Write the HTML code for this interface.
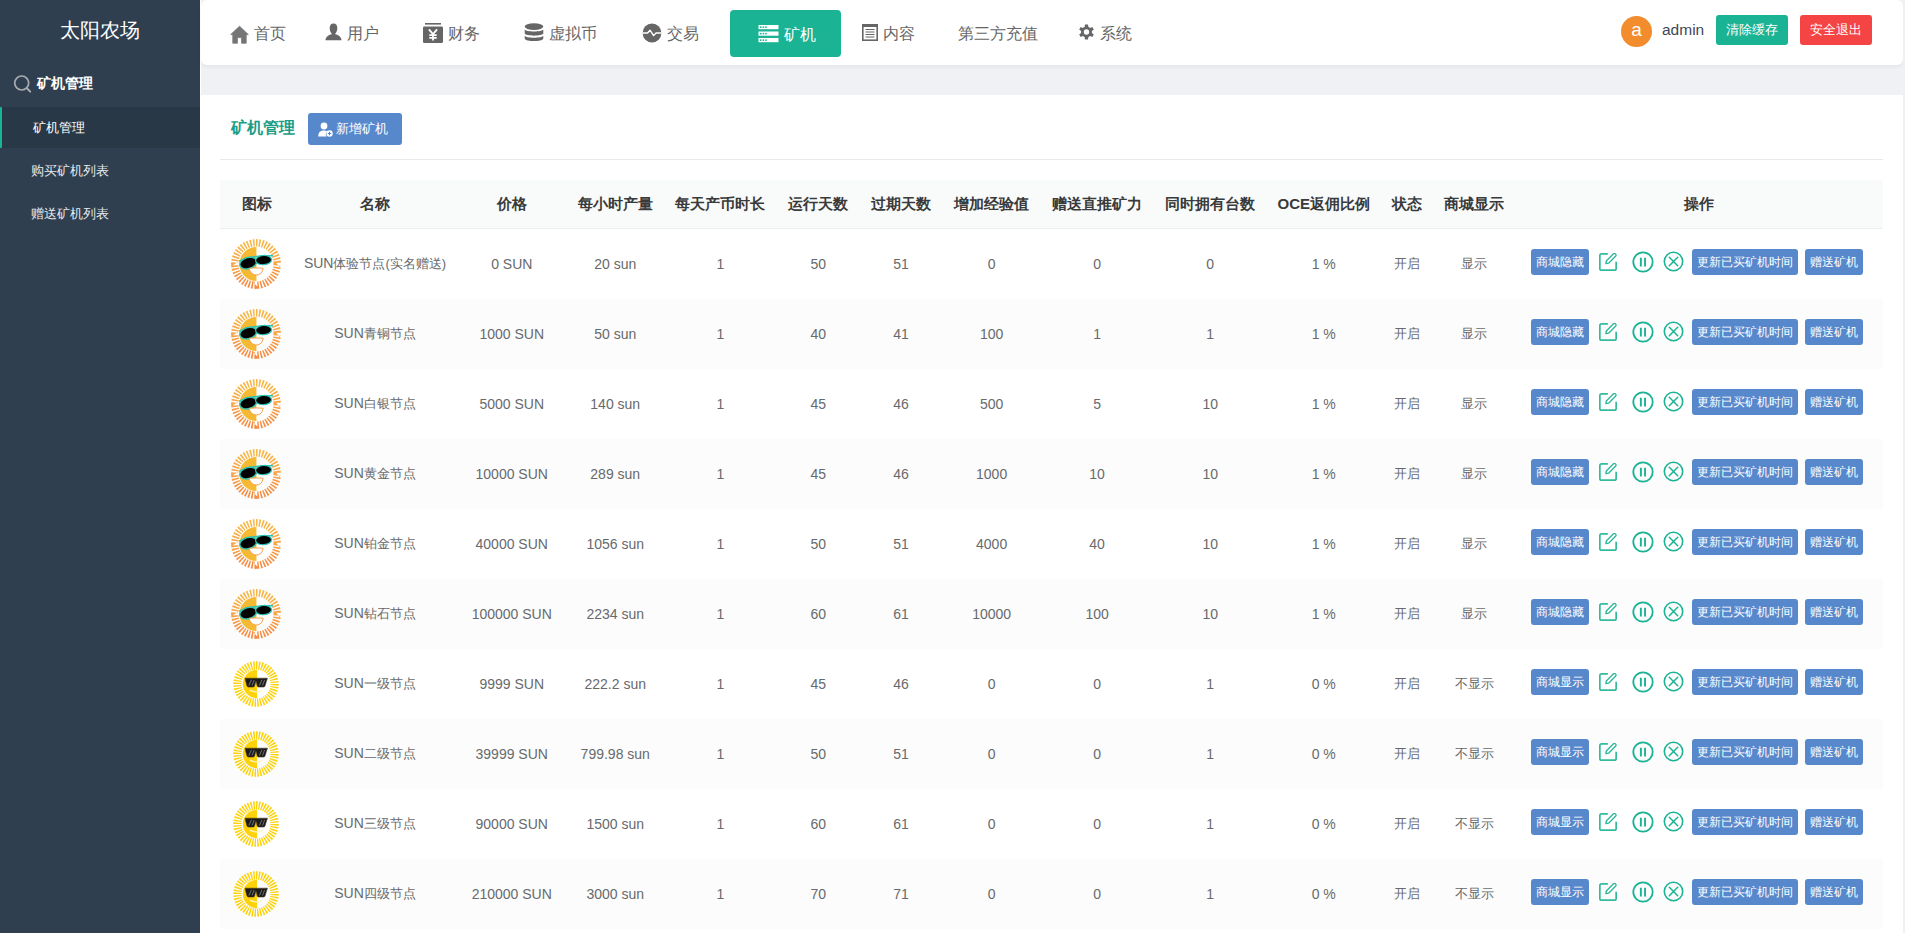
<!DOCTYPE html>
<html><head><meta charset="utf-8">
<style>
*{box-sizing:border-box;margin:0;padding:0}
html,body{width:1905px;height:933px;overflow:hidden;background:#fff;font-family:"Liberation Sans",sans-serif}
#side{position:absolute;left:0;top:0;width:200px;height:933px;background:#2f3f50}
#brand{position:absolute;left:0;top:16px;width:200px;text-align:center;color:#fff;font-size:20px;line-height:28px}
#sgroup{position:absolute;left:13px;top:74px;color:#fff;font-size:14px;font-weight:bold;line-height:18px}
#sgroup svg{position:absolute;left:0;top:1px}
#sgroup span{position:absolute;left:24px;top:0;white-space:nowrap}
.sitem{position:absolute;left:0;width:200px;height:41px;color:#e6e9ed;font-size:13px;line-height:41px;padding-left:31px}
.sitem.act{background:#293846;color:#fff;padding-left:33px}
.sitem.act:before{content:"";position:absolute;left:0;top:0;width:2px;height:41px;background:#1ab394;border-radius:0 1px 1px 0}
#grayband{position:absolute;left:201px;top:0;width:1702px;height:95px;background:#f0f1f5}
#hdr{position:absolute;left:201px;top:0;width:1702px;height:65px;background:#fff;border-radius:6px;box-shadow:0 2px 4px rgba(0,0,0,.05)}
.nav{position:absolute;top:0;height:65px;color:#666;font-size:16px;line-height:65px;white-space:nowrap}
.nav svg{position:absolute}
.nav span{position:absolute;top:1px}
#actbox{position:absolute;left:730px;top:10px;width:111px;height:47px;background:#1ab394;border-radius:4px}
#scroll{position:absolute;left:1903px;top:0;width:2px;height:933px;background:#f0f0f0}
#main{position:absolute;left:201px;top:95px;width:1702px;height:838px;background:#fff}
#ttl{position:absolute;left:231px;top:117px;color:#1a9c85;font-size:16px;font-weight:bold;line-height:22px}
#addbtn{position:absolute;left:308px;top:113px;width:94px;height:32px;background:#5888cc;border-radius:3px;color:#fff;font-size:13px;line-height:32px}
#addbtn svg{position:absolute;left:10px;top:9px}
#addbtn span{position:absolute;left:28px;top:0}
#sep{position:absolute;left:220px;top:159px;width:1663px;height:1px;background:#e7eaec}
table{position:absolute;left:220px;top:180px;width:1663px;border-collapse:separate;border-spacing:0;table-layout:fixed}
th{height:49px;background:#f9fafa;border-bottom:1px solid #eceeef;font-size:15px;font-weight:bold;color:#3a3a3a;text-align:center;padding:0;white-space:nowrap}
td{height:70px;font-size:14px;color:#676a6c;text-align:center;padding:0;white-space:nowrap}
tr.e td{background:#fcfcfc}
td i{font-style:normal;font-size:13px}
.ops{position:relative;height:70px}
.btn{position:absolute;top:20px;height:26px;background:#5888cc;border-radius:3px;color:#fff;font-size:12px;line-height:26px;text-align:center}
.ops svg{position:absolute}
</style></head><body>
<div id="side">
  <div id="brand">太阳农场</div>
  <div id="sgroup"><svg width="20" height="20" viewBox="0 0 20 20"><circle cx="8.7" cy="8" r="7" fill="none" stroke="#a9abad" stroke-width="1.7"/><line x1="13.9" y1="13.2" x2="17.2" y2="16.6" stroke="#a9abad" stroke-width="2" stroke-linecap="round"/></svg><span>矿机管理</span></div>
  <div class="sitem act" style="top:107px">矿机管理</div>
  <div class="sitem" style="top:150px">购买矿机列表</div>
  <div class="sitem" style="top:193px">赠送矿机列表</div>
</div>
<div id="grayband"></div>
<div id="hdr"></div>
<div id="actbox"></div>
<div id="scroll"></div>
<div id="main"></div>
<!-- NAV -->
<svg style="position:absolute;left:230px;top:25px" width="19" height="19" viewBox="0 0 19 19"><path d="M9.5 1.2 L18.3 9.6 L16.2 9.6 L16.2 18.2 L11.6 18.2 L11.6 12.6 L7.4 12.6 L7.4 18.2 L2.8 18.2 L2.8 9.6 L0.7 9.6 Z" fill="#757575" stroke="#757575" stroke-width="0.8" stroke-linejoin="round"/></svg>
<div class="nav" style="left:254px"><span>首页</span></div>
<svg style="position:absolute;left:325px;top:23px" width="17" height="18" viewBox="0 0 17 18"><path d="M8.5 0.5 C11.2 0.5 12.3 2.6 12.3 5.2 C12.3 7.6 11.2 9.6 10.3 10.5 L10.3 11.3 C13.5 12.2 16.2 13.6 16.6 17.3 L0.4 17.3 C0.8 13.6 3.5 12.2 6.7 11.3 L6.7 10.5 C5.8 9.6 4.7 7.6 4.7 5.2 C4.7 2.6 5.8 0.5 8.5 0.5 Z" fill="#666"/></svg>
<div class="nav" style="left:347px"><span>用户</span></div>
<svg style="position:absolute;left:423px;top:23px" width="20" height="20" viewBox="0 0 20 20"><rect x="2" y="0" width="16" height="1.6" fill="#666"/><rect x="0" y="3.6" width="20" height="16.4" rx="1.2" fill="#666"/><path d="M5.9 6.3 L10 11.2 L14.1 6.3 M10 11.2 L10 17.6 M6.3 12.2 H13.7 M6.3 14.9 H13.7" stroke="#fff" stroke-width="1.8" fill="none"/></svg>
<div class="nav" style="left:448px"><span>财务</span></div>
<svg style="position:absolute;left:524px;top:23px" width="20" height="19" viewBox="0 0 20 19"><ellipse cx="10" cy="3.6" rx="9.3" ry="3.4" fill="#666"/><path d="M0.7 6.6 C2 9.2 18 9.2 19.3 6.6 L19.3 10.6 C18 13.4 2 13.4 0.7 10.6 Z" fill="#666"/><path d="M0.7 12.8 C2 15.4 18 15.4 19.3 12.8 L19.3 15.4 C18 19 2 19 0.7 15.4 Z" fill="#666"/></svg>
<div class="nav" style="left:549px"><span>虚拟币</span></div>
<svg style="position:absolute;left:642px;top:23px" width="20" height="20" viewBox="0 0 20 20"><circle cx="10" cy="10" r="9.4" fill="#666"/><path d="M0.4 10 H5.6 L8 7.2 L11.6 12.6 L14 10 H19.6" stroke="#fff" stroke-width="1.4" fill="none" stroke-linejoin="round"/></svg>
<div class="nav" style="left:667px"><span>交易</span></div>
<svg style="position:absolute;left:758px;top:25px" width="21" height="18" viewBox="0 0 21 18"><g fill="#fff"><rect x="0.5" y="0" width="20" height="4.2"/><rect x="0.5" y="6.5" width="20" height="4.2"/><rect x="0.5" y="13" width="20" height="4.2"/></g><g fill="#1ab394"><rect x="2" y="1.4" width="1.6" height="1.5"/><rect x="4.6" y="1.4" width="1.6" height="1.5"/><rect x="7.2" y="1.4" width="1.6" height="1.5"/><rect x="2" y="7.9" width="1.6" height="1.5"/><rect x="4.6" y="7.9" width="1.6" height="1.5"/><rect x="7.2" y="7.9" width="1.6" height="1.5"/><rect x="2" y="14.4" width="1.6" height="1.5"/><rect x="4.6" y="14.4" width="1.6" height="1.5"/><rect x="7.2" y="14.4" width="1.6" height="1.5"/></g></svg>
<div class="nav" style="left:784px;color:#fff"><span style="top:2px">矿机</span></div>
<svg style="position:absolute;left:862px;top:24px" width="16" height="17" viewBox="0 0 16 17"><rect x="0.8" y="0.8" width="14.4" height="15.4" fill="none" stroke="#666" stroke-width="1.6"/><rect x="0.8" y="0.8" width="14.4" height="2.2" fill="#666"/><path d="M3.5 5.5 H12.5 M3.5 8 H12.5 M3.5 10.5 H12.5 M3.5 13 H12.5" stroke="#666" stroke-width="1.1"/></svg>
<div class="nav" style="left:883px"><span>内容</span></div>
<div class="nav" style="left:958px"><span>第三方充值</span></div>
<svg style="position:absolute;left:1078px;top:23px" width="17" height="18" viewBox="0 0 17 18"><path fill="#666" fill-rule="evenodd" d="M7 0.6 H10 L10.4 3 C11 3.2 11.6 3.5 12.1 3.9 L14.3 3 L15.8 5.6 L13.9 7.1 C14 7.7 14 8.3 13.9 8.9 L15.8 10.4 L14.3 13 L12.1 12.1 C11.6 12.5 11 12.8 10.4 13 L10 15.4 H7 L6.6 13 C6 12.8 5.4 12.5 4.9 12.1 L2.7 13 L1.2 10.4 L3.1 8.9 C3 8.3 3 7.7 3.1 7.1 L1.2 5.6 L2.7 3 L4.9 3.9 C5.4 3.5 6 3.2 6.6 3 Z M8.5 5.3 A2.7 2.7 0 1 0 8.5 10.7 A2.7 2.7 0 1 0 8.5 5.3 Z" transform="translate(0,1)"/></svg>
<div class="nav" style="left:1100px"><span>系统</span></div>
<!-- right -->
<div style="position:absolute;left:1621px;top:16px;width:31px;height:31px;border-radius:50%;background:#f28c2c;color:#fff;font-size:19px;line-height:27px;text-align:center">a</div>
<div style="position:absolute;left:1662px;top:20px;font-size:15.5px;line-height:20px;color:#3f4756">admin</div>
<div style="position:absolute;left:1716px;top:15px;width:72px;height:30px;border-radius:3px;background:#1ab394;color:#fff;font-size:13px;line-height:30px;text-align:center">清除缓存</div>
<div style="position:absolute;left:1800px;top:15px;width:72px;height:30px;border-radius:3px;background:#f44444;color:#fff;font-size:13px;line-height:30px;text-align:center">安全退出</div>
<!-- title -->
<div id="ttl">矿机管理</div>
<div id="addbtn"><svg width="15" height="15" viewBox="0 0 15 15"><circle cx="6" cy="4" r="3.4" fill="#fff"/><path d="M0.3 14.5 C0.3 10 2.8 8.6 6 8.6 C7.3 8.6 8.4 8.8 9.2 9.3 A3.6 3.6 0 0 0 8.6 14.5 Z" fill="#fff"/><circle cx="11.5" cy="11.5" r="3.2" fill="#fff"/><path d="M11.5 9.8 V13.2 M9.8 11.5 H13.2" stroke="#5888cc" stroke-width="1.1"/></svg><span>新增矿机</span></div>
<div id="sep"></div>
<svg width="0" height="0" style="position:absolute">
<defs>
<linearGradient id="og" x1="0" y1="0" x2="0" y2="1"><stop offset="0" stop-color="#f8b43e"/><stop offset="1" stop-color="#f6873a"/></linearGradient>
<g id="suno">
<circle cx="25" cy="25" r="21.2" fill="none" stroke="url(#og)" stroke-width="7.4" pathLength="44" stroke-dasharray="0.52 0.48" opacity="0.95"/>
<path d="M25.4 8 A17 17 0 0 0 25.4 42 Z" fill="#f6b933"/>
<g transform="translate(0 1.2)"><path d="M8.8 20.8 Q18 15.2 41.5 15.6" fill="none" stroke="#2ec3b6" stroke-width="1.6" stroke-linecap="round"/>
<ellipse cx="17.2" cy="22.9" rx="8.6" ry="5.6" transform="rotate(-16 17.2 22.9)" fill="#000" stroke="#2ec3b6" stroke-width="1.4"/>
<ellipse cx="32.6" cy="19.9" rx="8" ry="4.6" transform="rotate(-4 32.6 19.9)" fill="#000" stroke="#2ec3b6" stroke-width="1.2"/></g>
<path d="M18 29.3 Q25 28.6 32.2 29.2 Q31.2 36 25 36 Q19.8 35.8 18 29.3 Z" fill="#fff" stroke="#f59a3c" stroke-width="0.9"/>
</g>
<g id="suny">
<circle cx="25" cy="25" r="18.6" fill="none" stroke="#fdd20a" stroke-width="8.2" pathLength="44" stroke-dasharray="0.55 0.45"/>
<path d="M26 10.8 A14.2 14.2 0 0 0 26 39.2 Z" fill="#fdd20a"/>
<path d="M14 19.2 H36.5 L35.5 22 L34 27 Q33.7 28 32.5 28 H27.5 Q26.5 28 26.2 27 L25.3 22.6 H24.7 L23.5 27 Q23.2 28 22.2 28 H17.5 Q16.4 28 16 27 L14.6 22 Z" fill="#1a1a1a" stroke="#4a3a1a" stroke-width="0.6"/>
<path d="M17.8 26.5 L20.5 20.8 M21 26.5 L23.2 21 M28.4 26.5 L31 20.8 M31.5 26.5 L33.6 21" stroke="#9a9a9a" stroke-width="0.7"/>
<path d="M19 31.2 Q25.5 34.5 31 31.4" fill="none" stroke="#fff5c0" stroke-width="1.3"/>
</g>
</defs></svg>
<table><colgroup><col style="width:73px"><col style="width:164px"><col style="width:109.5px"><col style="width:97.5px"><col style="width:112.75px"><col style="width:83px"><col style="width:82.75px"><col style="width:98.25px"><col style="width:112.75px"><col style="width:113.5px"><col style="width:113.5px"><col style="width:53px"><col style="width:81px"><col style="width:368.5px"></colgroup><tr><th>图标</th><th>名称</th><th>价格</th><th>每小时产量</th><th>每天产币时长</th><th>运行天数</th><th>过期天数</th><th>增加经验值</th><th>赠送直推矿力</th><th>同时拥有台数</th><th>OCE返佣比例</th><th>状态</th><th>商城显示</th><th>操作</th></tr><tr><td><svg width="50" height="50" style="display:block;margin-left:10.7px"><use href="#suno"/></svg></td><td>SUN<i>体验节点(实名赠送)</i></td><td>0 SUN</td><td>20 sun</td><td>1</td><td>50</td><td>51</td><td>0</td><td>0</td><td>0</td><td>1 %</td><td><i>开启</i></td><td><i>显示</i></td><td><div class="ops"><div class="btn" style="left:16.5px;width:58px">商城隐藏</div><svg style="left:84.5px;top:23.6px" width="18" height="18" viewBox="0 0 18 18"><path d="M8.9 0.85 H2.6 Q0.85 0.85 0.85 2.6 V15.4 Q0.85 17.15 2.6 17.15 H15.4 Q17.15 17.15 17.15 15.4 V8.7" fill="none" stroke="#34bb9c" stroke-width="1.7"/><g transform="translate(6.6 10.9) rotate(-45)"><path d="M0.4 0 L2.6 -1.6 H12.4 Q14 -1.6 14 0 Q14 1.6 12.4 1.6 H2.6 Z" fill="none" stroke="#2ab799" stroke-width="1.3" stroke-linejoin="round"/></g></svg><svg style="left:117.59999999999991px;top:22.2px" width="22" height="22" viewBox="0 0 22 22"><circle cx="11" cy="11" r="9.7" fill="none" stroke="#1ab394" stroke-width="1.8"/><path d="M8.85 6.8 V15.4 M13.05 6.8 V15.4" stroke="#1ab394" stroke-width="1.9"/></svg><svg style="left:148.0px;top:22.4px" width="21" height="21" viewBox="0 0 21 21"><circle cx="10.5" cy="10.5" r="9.2" fill="none" stroke="#1ab394" stroke-width="1.6"/><path d="M6.3 6.3 L14.7 14.7 M14.7 6.3 L6.3 14.7" stroke="#1ab394" stroke-width="1.5" stroke-linecap="round"/></svg><div class="btn" style="left:177.5px;width:106px">更新已买矿机时间</div><div class="btn" style="left:290.5px;width:58px">赠送矿机</div></div></td></tr><tr class="e"><td><svg width="50" height="50" style="display:block;margin-left:10.7px"><use href="#suno"/></svg></td><td>SUN<i>青铜节点</i></td><td>1000 SUN</td><td>50 sun</td><td>1</td><td>40</td><td>41</td><td>100</td><td>1</td><td>1</td><td>1 %</td><td><i>开启</i></td><td><i>显示</i></td><td><div class="ops"><div class="btn" style="left:16.5px;width:58px">商城隐藏</div><svg style="left:84.5px;top:23.6px" width="18" height="18" viewBox="0 0 18 18"><path d="M8.9 0.85 H2.6 Q0.85 0.85 0.85 2.6 V15.4 Q0.85 17.15 2.6 17.15 H15.4 Q17.15 17.15 17.15 15.4 V8.7" fill="none" stroke="#34bb9c" stroke-width="1.7"/><g transform="translate(6.6 10.9) rotate(-45)"><path d="M0.4 0 L2.6 -1.6 H12.4 Q14 -1.6 14 0 Q14 1.6 12.4 1.6 H2.6 Z" fill="none" stroke="#2ab799" stroke-width="1.3" stroke-linejoin="round"/></g></svg><svg style="left:117.59999999999991px;top:22.2px" width="22" height="22" viewBox="0 0 22 22"><circle cx="11" cy="11" r="9.7" fill="none" stroke="#1ab394" stroke-width="1.8"/><path d="M8.85 6.8 V15.4 M13.05 6.8 V15.4" stroke="#1ab394" stroke-width="1.9"/></svg><svg style="left:148.0px;top:22.4px" width="21" height="21" viewBox="0 0 21 21"><circle cx="10.5" cy="10.5" r="9.2" fill="none" stroke="#1ab394" stroke-width="1.6"/><path d="M6.3 6.3 L14.7 14.7 M14.7 6.3 L6.3 14.7" stroke="#1ab394" stroke-width="1.5" stroke-linecap="round"/></svg><div class="btn" style="left:177.5px;width:106px">更新已买矿机时间</div><div class="btn" style="left:290.5px;width:58px">赠送矿机</div></div></td></tr><tr><td><svg width="50" height="50" style="display:block;margin-left:10.7px"><use href="#suno"/></svg></td><td>SUN<i>白银节点</i></td><td>5000 SUN</td><td>140 sun</td><td>1</td><td>45</td><td>46</td><td>500</td><td>5</td><td>10</td><td>1 %</td><td><i>开启</i></td><td><i>显示</i></td><td><div class="ops"><div class="btn" style="left:16.5px;width:58px">商城隐藏</div><svg style="left:84.5px;top:23.6px" width="18" height="18" viewBox="0 0 18 18"><path d="M8.9 0.85 H2.6 Q0.85 0.85 0.85 2.6 V15.4 Q0.85 17.15 2.6 17.15 H15.4 Q17.15 17.15 17.15 15.4 V8.7" fill="none" stroke="#34bb9c" stroke-width="1.7"/><g transform="translate(6.6 10.9) rotate(-45)"><path d="M0.4 0 L2.6 -1.6 H12.4 Q14 -1.6 14 0 Q14 1.6 12.4 1.6 H2.6 Z" fill="none" stroke="#2ab799" stroke-width="1.3" stroke-linejoin="round"/></g></svg><svg style="left:117.59999999999991px;top:22.2px" width="22" height="22" viewBox="0 0 22 22"><circle cx="11" cy="11" r="9.7" fill="none" stroke="#1ab394" stroke-width="1.8"/><path d="M8.85 6.8 V15.4 M13.05 6.8 V15.4" stroke="#1ab394" stroke-width="1.9"/></svg><svg style="left:148.0px;top:22.4px" width="21" height="21" viewBox="0 0 21 21"><circle cx="10.5" cy="10.5" r="9.2" fill="none" stroke="#1ab394" stroke-width="1.6"/><path d="M6.3 6.3 L14.7 14.7 M14.7 6.3 L6.3 14.7" stroke="#1ab394" stroke-width="1.5" stroke-linecap="round"/></svg><div class="btn" style="left:177.5px;width:106px">更新已买矿机时间</div><div class="btn" style="left:290.5px;width:58px">赠送矿机</div></div></td></tr><tr class="e"><td><svg width="50" height="50" style="display:block;margin-left:10.7px"><use href="#suno"/></svg></td><td>SUN<i>黄金节点</i></td><td>10000 SUN</td><td>289 sun</td><td>1</td><td>45</td><td>46</td><td>1000</td><td>10</td><td>10</td><td>1 %</td><td><i>开启</i></td><td><i>显示</i></td><td><div class="ops"><div class="btn" style="left:16.5px;width:58px">商城隐藏</div><svg style="left:84.5px;top:23.6px" width="18" height="18" viewBox="0 0 18 18"><path d="M8.9 0.85 H2.6 Q0.85 0.85 0.85 2.6 V15.4 Q0.85 17.15 2.6 17.15 H15.4 Q17.15 17.15 17.15 15.4 V8.7" fill="none" stroke="#34bb9c" stroke-width="1.7"/><g transform="translate(6.6 10.9) rotate(-45)"><path d="M0.4 0 L2.6 -1.6 H12.4 Q14 -1.6 14 0 Q14 1.6 12.4 1.6 H2.6 Z" fill="none" stroke="#2ab799" stroke-width="1.3" stroke-linejoin="round"/></g></svg><svg style="left:117.59999999999991px;top:22.2px" width="22" height="22" viewBox="0 0 22 22"><circle cx="11" cy="11" r="9.7" fill="none" stroke="#1ab394" stroke-width="1.8"/><path d="M8.85 6.8 V15.4 M13.05 6.8 V15.4" stroke="#1ab394" stroke-width="1.9"/></svg><svg style="left:148.0px;top:22.4px" width="21" height="21" viewBox="0 0 21 21"><circle cx="10.5" cy="10.5" r="9.2" fill="none" stroke="#1ab394" stroke-width="1.6"/><path d="M6.3 6.3 L14.7 14.7 M14.7 6.3 L6.3 14.7" stroke="#1ab394" stroke-width="1.5" stroke-linecap="round"/></svg><div class="btn" style="left:177.5px;width:106px">更新已买矿机时间</div><div class="btn" style="left:290.5px;width:58px">赠送矿机</div></div></td></tr><tr><td><svg width="50" height="50" style="display:block;margin-left:10.7px"><use href="#suno"/></svg></td><td>SUN<i>铂金节点</i></td><td>40000 SUN</td><td>1056 sun</td><td>1</td><td>50</td><td>51</td><td>4000</td><td>40</td><td>10</td><td>1 %</td><td><i>开启</i></td><td><i>显示</i></td><td><div class="ops"><div class="btn" style="left:16.5px;width:58px">商城隐藏</div><svg style="left:84.5px;top:23.6px" width="18" height="18" viewBox="0 0 18 18"><path d="M8.9 0.85 H2.6 Q0.85 0.85 0.85 2.6 V15.4 Q0.85 17.15 2.6 17.15 H15.4 Q17.15 17.15 17.15 15.4 V8.7" fill="none" stroke="#34bb9c" stroke-width="1.7"/><g transform="translate(6.6 10.9) rotate(-45)"><path d="M0.4 0 L2.6 -1.6 H12.4 Q14 -1.6 14 0 Q14 1.6 12.4 1.6 H2.6 Z" fill="none" stroke="#2ab799" stroke-width="1.3" stroke-linejoin="round"/></g></svg><svg style="left:117.59999999999991px;top:22.2px" width="22" height="22" viewBox="0 0 22 22"><circle cx="11" cy="11" r="9.7" fill="none" stroke="#1ab394" stroke-width="1.8"/><path d="M8.85 6.8 V15.4 M13.05 6.8 V15.4" stroke="#1ab394" stroke-width="1.9"/></svg><svg style="left:148.0px;top:22.4px" width="21" height="21" viewBox="0 0 21 21"><circle cx="10.5" cy="10.5" r="9.2" fill="none" stroke="#1ab394" stroke-width="1.6"/><path d="M6.3 6.3 L14.7 14.7 M14.7 6.3 L6.3 14.7" stroke="#1ab394" stroke-width="1.5" stroke-linecap="round"/></svg><div class="btn" style="left:177.5px;width:106px">更新已买矿机时间</div><div class="btn" style="left:290.5px;width:58px">赠送矿机</div></div></td></tr><tr class="e"><td><svg width="50" height="50" style="display:block;margin-left:10.7px"><use href="#suno"/></svg></td><td>SUN<i>钻石节点</i></td><td>100000 SUN</td><td>2234 sun</td><td>1</td><td>60</td><td>61</td><td>10000</td><td>100</td><td>10</td><td>1 %</td><td><i>开启</i></td><td><i>显示</i></td><td><div class="ops"><div class="btn" style="left:16.5px;width:58px">商城隐藏</div><svg style="left:84.5px;top:23.6px" width="18" height="18" viewBox="0 0 18 18"><path d="M8.9 0.85 H2.6 Q0.85 0.85 0.85 2.6 V15.4 Q0.85 17.15 2.6 17.15 H15.4 Q17.15 17.15 17.15 15.4 V8.7" fill="none" stroke="#34bb9c" stroke-width="1.7"/><g transform="translate(6.6 10.9) rotate(-45)"><path d="M0.4 0 L2.6 -1.6 H12.4 Q14 -1.6 14 0 Q14 1.6 12.4 1.6 H2.6 Z" fill="none" stroke="#2ab799" stroke-width="1.3" stroke-linejoin="round"/></g></svg><svg style="left:117.59999999999991px;top:22.2px" width="22" height="22" viewBox="0 0 22 22"><circle cx="11" cy="11" r="9.7" fill="none" stroke="#1ab394" stroke-width="1.8"/><path d="M8.85 6.8 V15.4 M13.05 6.8 V15.4" stroke="#1ab394" stroke-width="1.9"/></svg><svg style="left:148.0px;top:22.4px" width="21" height="21" viewBox="0 0 21 21"><circle cx="10.5" cy="10.5" r="9.2" fill="none" stroke="#1ab394" stroke-width="1.6"/><path d="M6.3 6.3 L14.7 14.7 M14.7 6.3 L6.3 14.7" stroke="#1ab394" stroke-width="1.5" stroke-linecap="round"/></svg><div class="btn" style="left:177.5px;width:106px">更新已买矿机时间</div><div class="btn" style="left:290.5px;width:58px">赠送矿机</div></div></td></tr><tr><td><svg width="50" height="50" style="display:block;margin-left:10.7px"><use href="#suny"/></svg></td><td>SUN<i>一级节点</i></td><td>9999 SUN</td><td>222.2 sun</td><td>1</td><td>45</td><td>46</td><td>0</td><td>0</td><td>1</td><td>0 %</td><td><i>开启</i></td><td><i>不显示</i></td><td><div class="ops"><div class="btn" style="left:16.5px;width:58px">商城显示</div><svg style="left:84.5px;top:23.6px" width="18" height="18" viewBox="0 0 18 18"><path d="M8.9 0.85 H2.6 Q0.85 0.85 0.85 2.6 V15.4 Q0.85 17.15 2.6 17.15 H15.4 Q17.15 17.15 17.15 15.4 V8.7" fill="none" stroke="#34bb9c" stroke-width="1.7"/><g transform="translate(6.6 10.9) rotate(-45)"><path d="M0.4 0 L2.6 -1.6 H12.4 Q14 -1.6 14 0 Q14 1.6 12.4 1.6 H2.6 Z" fill="none" stroke="#2ab799" stroke-width="1.3" stroke-linejoin="round"/></g></svg><svg style="left:117.59999999999991px;top:22.2px" width="22" height="22" viewBox="0 0 22 22"><circle cx="11" cy="11" r="9.7" fill="none" stroke="#1ab394" stroke-width="1.8"/><path d="M8.85 6.8 V15.4 M13.05 6.8 V15.4" stroke="#1ab394" stroke-width="1.9"/></svg><svg style="left:148.0px;top:22.4px" width="21" height="21" viewBox="0 0 21 21"><circle cx="10.5" cy="10.5" r="9.2" fill="none" stroke="#1ab394" stroke-width="1.6"/><path d="M6.3 6.3 L14.7 14.7 M14.7 6.3 L6.3 14.7" stroke="#1ab394" stroke-width="1.5" stroke-linecap="round"/></svg><div class="btn" style="left:177.5px;width:106px">更新已买矿机时间</div><div class="btn" style="left:290.5px;width:58px">赠送矿机</div></div></td></tr><tr class="e"><td><svg width="50" height="50" style="display:block;margin-left:10.7px"><use href="#suny"/></svg></td><td>SUN<i>二级节点</i></td><td>39999 SUN</td><td>799.98 sun</td><td>1</td><td>50</td><td>51</td><td>0</td><td>0</td><td>1</td><td>0 %</td><td><i>开启</i></td><td><i>不显示</i></td><td><div class="ops"><div class="btn" style="left:16.5px;width:58px">商城显示</div><svg style="left:84.5px;top:23.6px" width="18" height="18" viewBox="0 0 18 18"><path d="M8.9 0.85 H2.6 Q0.85 0.85 0.85 2.6 V15.4 Q0.85 17.15 2.6 17.15 H15.4 Q17.15 17.15 17.15 15.4 V8.7" fill="none" stroke="#34bb9c" stroke-width="1.7"/><g transform="translate(6.6 10.9) rotate(-45)"><path d="M0.4 0 L2.6 -1.6 H12.4 Q14 -1.6 14 0 Q14 1.6 12.4 1.6 H2.6 Z" fill="none" stroke="#2ab799" stroke-width="1.3" stroke-linejoin="round"/></g></svg><svg style="left:117.59999999999991px;top:22.2px" width="22" height="22" viewBox="0 0 22 22"><circle cx="11" cy="11" r="9.7" fill="none" stroke="#1ab394" stroke-width="1.8"/><path d="M8.85 6.8 V15.4 M13.05 6.8 V15.4" stroke="#1ab394" stroke-width="1.9"/></svg><svg style="left:148.0px;top:22.4px" width="21" height="21" viewBox="0 0 21 21"><circle cx="10.5" cy="10.5" r="9.2" fill="none" stroke="#1ab394" stroke-width="1.6"/><path d="M6.3 6.3 L14.7 14.7 M14.7 6.3 L6.3 14.7" stroke="#1ab394" stroke-width="1.5" stroke-linecap="round"/></svg><div class="btn" style="left:177.5px;width:106px">更新已买矿机时间</div><div class="btn" style="left:290.5px;width:58px">赠送矿机</div></div></td></tr><tr><td><svg width="50" height="50" style="display:block;margin-left:10.7px"><use href="#suny"/></svg></td><td>SUN<i>三级节点</i></td><td>90000 SUN</td><td>1500 sun</td><td>1</td><td>60</td><td>61</td><td>0</td><td>0</td><td>1</td><td>0 %</td><td><i>开启</i></td><td><i>不显示</i></td><td><div class="ops"><div class="btn" style="left:16.5px;width:58px">商城显示</div><svg style="left:84.5px;top:23.6px" width="18" height="18" viewBox="0 0 18 18"><path d="M8.9 0.85 H2.6 Q0.85 0.85 0.85 2.6 V15.4 Q0.85 17.15 2.6 17.15 H15.4 Q17.15 17.15 17.15 15.4 V8.7" fill="none" stroke="#34bb9c" stroke-width="1.7"/><g transform="translate(6.6 10.9) rotate(-45)"><path d="M0.4 0 L2.6 -1.6 H12.4 Q14 -1.6 14 0 Q14 1.6 12.4 1.6 H2.6 Z" fill="none" stroke="#2ab799" stroke-width="1.3" stroke-linejoin="round"/></g></svg><svg style="left:117.59999999999991px;top:22.2px" width="22" height="22" viewBox="0 0 22 22"><circle cx="11" cy="11" r="9.7" fill="none" stroke="#1ab394" stroke-width="1.8"/><path d="M8.85 6.8 V15.4 M13.05 6.8 V15.4" stroke="#1ab394" stroke-width="1.9"/></svg><svg style="left:148.0px;top:22.4px" width="21" height="21" viewBox="0 0 21 21"><circle cx="10.5" cy="10.5" r="9.2" fill="none" stroke="#1ab394" stroke-width="1.6"/><path d="M6.3 6.3 L14.7 14.7 M14.7 6.3 L6.3 14.7" stroke="#1ab394" stroke-width="1.5" stroke-linecap="round"/></svg><div class="btn" style="left:177.5px;width:106px">更新已买矿机时间</div><div class="btn" style="left:290.5px;width:58px">赠送矿机</div></div></td></tr><tr class="e"><td><svg width="50" height="50" style="display:block;margin-left:10.7px"><use href="#suny"/></svg></td><td>SUN<i>四级节点</i></td><td>210000 SUN</td><td>3000 sun</td><td>1</td><td>70</td><td>71</td><td>0</td><td>0</td><td>1</td><td>0 %</td><td><i>开启</i></td><td><i>不显示</i></td><td><div class="ops"><div class="btn" style="left:16.5px;width:58px">商城显示</div><svg style="left:84.5px;top:23.6px" width="18" height="18" viewBox="0 0 18 18"><path d="M8.9 0.85 H2.6 Q0.85 0.85 0.85 2.6 V15.4 Q0.85 17.15 2.6 17.15 H15.4 Q17.15 17.15 17.15 15.4 V8.7" fill="none" stroke="#34bb9c" stroke-width="1.7"/><g transform="translate(6.6 10.9) rotate(-45)"><path d="M0.4 0 L2.6 -1.6 H12.4 Q14 -1.6 14 0 Q14 1.6 12.4 1.6 H2.6 Z" fill="none" stroke="#2ab799" stroke-width="1.3" stroke-linejoin="round"/></g></svg><svg style="left:117.59999999999991px;top:22.2px" width="22" height="22" viewBox="0 0 22 22"><circle cx="11" cy="11" r="9.7" fill="none" stroke="#1ab394" stroke-width="1.8"/><path d="M8.85 6.8 V15.4 M13.05 6.8 V15.4" stroke="#1ab394" stroke-width="1.9"/></svg><svg style="left:148.0px;top:22.4px" width="21" height="21" viewBox="0 0 21 21"><circle cx="10.5" cy="10.5" r="9.2" fill="none" stroke="#1ab394" stroke-width="1.6"/><path d="M6.3 6.3 L14.7 14.7 M14.7 6.3 L6.3 14.7" stroke="#1ab394" stroke-width="1.5" stroke-linecap="round"/></svg><div class="btn" style="left:177.5px;width:106px">更新已买矿机时间</div><div class="btn" style="left:290.5px;width:58px">赠送矿机</div></div></td></tr></table></body></html>
